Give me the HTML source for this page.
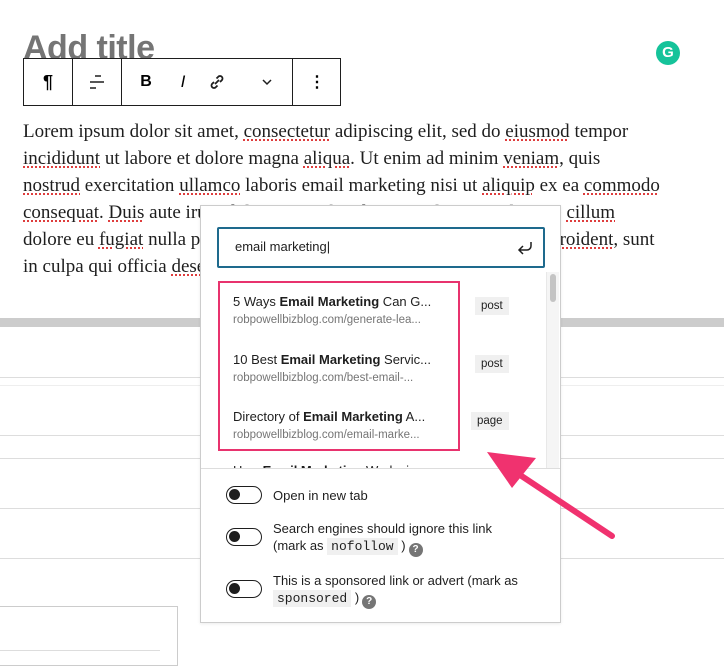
<!DOCTYPE html>
<html><head><meta charset="utf-8"><style>
*{box-sizing:border-box;margin:0;padding:0}
body{width:724px;height:660px;overflow:hidden;background:#fff;position:relative;font-family:"Liberation Sans",sans-serif}
.abs{position:absolute}
.title{left:23px;top:29px;font-size:34px;font-weight:bold;color:#757575;letter-spacing:-0.5px}
.tb{left:23px;top:58px;width:318px;height:48px;border:1px solid #1e1e1e;background:#fff}
.tb .d{position:absolute;top:0;width:1px;height:46px;background:#1e1e1e}
.tb .i{position:absolute;top:0;height:46px;display:flex;align-items:center;justify-content:center}
.p{left:23px;top:118px;width:700px;font-family:"Liberation Serif",serif;font-size:19px;line-height:27px;color:#1e1e1e;white-space:nowrap}
.u{text-decoration:underline dotted #d33;text-underline-offset:3px}
.hl{height:1px;background:#ddd;left:0;width:724px}
.pop{left:200px;top:205px;width:361px;height:418px;background:#fff;border:1px solid #ccc;box-shadow:0 1px 3px rgba(0,0,0,.08)}
.item{position:absolute;left:32px;font-size:13px;color:#1e1e1e}
.item .s{font-size:11.5px;color:#757575;margin-top:5px}
.tag{position:absolute;left:274px;background:#f0f0f0;font-size:11.5px;padding:3px 6px;color:#1e1e1e}
.tg{position:absolute;left:25px;width:36px;height:18px;border:1.5px solid #1e1e1e;border-radius:9px}
.tg:after{content:"";position:absolute;left:2px;top:2px;width:11px;height:11px;border-radius:50%;background:#1e1e1e}
.lb{position:absolute;left:72px;font-size:13px;color:#1e1e1e;line-height:17px}
code{font-family:"Liberation Mono",monospace;background:#f0f0f0;padding:1px 4px;font-size:13px}
.q{display:inline-block;width:14px;height:14px;border-radius:50%;background:#757575;color:#fff;font-size:10px;font-weight:bold;text-align:center;line-height:14px;vertical-align:-2px;margin-left:3px}
</style></head><body>
<div class="abs title">Add title</div>
<div class="abs" style="left:656px;top:41px;width:24px;height:24px;border-radius:50%;background:#15c39a;color:#fff;font-weight:bold;font-size:15px;text-align:center;line-height:24px">G</div>
<div class="abs tb">
<div class="i" style="left:0;width:48px;font-size:18px;font-weight:bold">¶</div>
<div class="d" style="left:48px"></div>
<div class="i" style="left:49px;width:48px"><svg width="18" height="18"><path d="M7 3h6M2 9h14M2 15h6" stroke="#1e1e1e" stroke-width="1.5"/></svg></div>
<div class="d" style="left:97px"></div>
<div class="i" style="left:114px;width:16px;font-size:16px;font-weight:bold">B</div>
<div class="i" style="left:151px;width:16px;font-size:17px;font-style:italic;font-family:'Liberation Sans'">I</div>
<div class="i" style="left:183px;width:20px"><svg width="18" height="18"><path d="M7 11l4-4M6 9l-2 2a2.5 2.5 0 003.5 3.5l2-2M12 9l2-2a2.5 2.5 0 00-3.5-3.5l-2 2" stroke="#1e1e1e" stroke-width="1.8" fill="none"/></svg></div>
<div class="i" style="left:236px;width:14px"><svg width="12" height="8"><path d="M2 2l4 4 4-4" stroke="#1e1e1e" stroke-width="1.5" fill="none"/></svg></div>
<div class="d" style="left:268px"></div>
<div class="i" style="left:269px;width:48px;font-weight:bold;font-size:16px">⋮</div>
</div>
<div class="abs p">Lorem ipsum dolor sit amet, <span class="u">consectetur</span> adipiscing elit, sed do <span class="u">eiusmod</span> tempor<br><span class="u">incididunt</span> ut labore et dolore magna <span class="u">aliqua</span>. Ut enim ad minim <span class="u">veniam</span>, quis<br><span class="u">nostrud</span> exercitation <span class="u">ullamco</span> laboris email marketing nisi ut <span class="u">aliquip</span> ex ea <span class="u">commodo</span><br><span class="u">consequat</span>. <span class="u">Duis</span> aute irure dolor in reprehenderit in voluptate velit esse <span class="u">cillum</span><br>dolore eu <span class="u">fugiat</span> nulla pariatur. Excepteur sint occaecat cupidatat non <span class="u">proident</span>, sunt<br>in culpa qui officia <span class="u">deserunt</span> mollit anim id est laborum.</div>
<div class="abs" style="left:0;top:318px;width:724px;height:9px;background:#ccc"></div>
<div class="abs hl" style="top:377px"></div>
<div class="abs hl" style="top:385px;background:#eee"></div>
<div class="abs hl" style="top:435px"></div>
<div class="abs hl" style="top:458px"></div>
<div class="abs hl" style="top:508px"></div>
<div class="abs hl" style="top:558px"></div>
<div class="abs" style="left:-1px;top:606px;width:179px;height:60px;border:1px solid #ccc"></div>
<div class="abs" style="left:0;top:650px;width:160px;height:1px;background:#ddd"></div>
<div class="abs pop">
<div style="position:absolute;left:16px;top:21px;width:328px;height:41px;border:2px solid #1e6a8d;border-radius:2px;font-size:13px;padding:10px 16px;color:#1e1e1e">email marketing|</div>
<svg style="position:absolute;left:314px;top:34px" width="20" height="18"><path d="M16 2v4a4 4 0 01-4 4H4M8 6l-4 4 4 4" stroke="#1e1e1e" stroke-width="1.5" fill="none"/></svg>
<div style="position:absolute;left:345px;top:66px;width:13px;height:196px;background:#f5f5f5;border-left:1px solid #e8e8e8"></div>
<div style="position:absolute;left:349px;top:68px;width:6px;height:28px;background:#c4c4c4;border-radius:3px"></div>
<div style="position:absolute;left:0;top:66px;width:345px;height:196px;overflow:hidden">
<div class="item" style="top:22px">5 Ways <b>Email Marketing</b> Can G...<div class="s">robpowellbizblog.com/generate-lea...</div></div>
<div class="tag" style="top:25px">post</div>
<div class="item" style="top:80px">10 Best <b>Email Marketing</b> Servic...<div class="s">robpowellbizblog.com/best-email-...</div></div>
<div class="tag" style="top:83px">post</div>
<div class="item" style="top:137px">Directory of <b>Email Marketing</b> A...<div class="s">robpowellbizblog.com/email-marke...</div></div>
<div class="tag" style="top:140px;left:270px">page</div>
<div class="item" style="top:191px">How <b>Email Marketing</b> Works in</div>
</div>
<div style="position:absolute;left:0;top:262px;width:359px;height:1px;background:#ddd"></div>
<div class="abs" style="left:17px;top:75px;width:242px;height:170px;border:2.5px solid #e8336e"></div>
<div class="tg" style="top:280px"></div><div class="lb" style="top:281px">Open in new tab</div>
<div class="tg" style="top:322px"></div><div class="lb" style="top:314px">Search engines should ignore this link<br>(mark as <code>nofollow</code> )<span class="q">?</span></div>
<div class="tg" style="top:374px"></div><div class="lb" style="top:366px">This is a sponsored link or advert (mark as<br><code>sponsored</code> )<span class="q">?</span></div>
</div>
<svg class="abs" style="left:470px;top:440px" width="160" height="110"><path d="M142 96L38 27" stroke="#f0326f" stroke-width="6" stroke-linecap="round"/><path d="M17 12L66 18 42 48Z" fill="#f0326f"/></svg>
</body></html>
